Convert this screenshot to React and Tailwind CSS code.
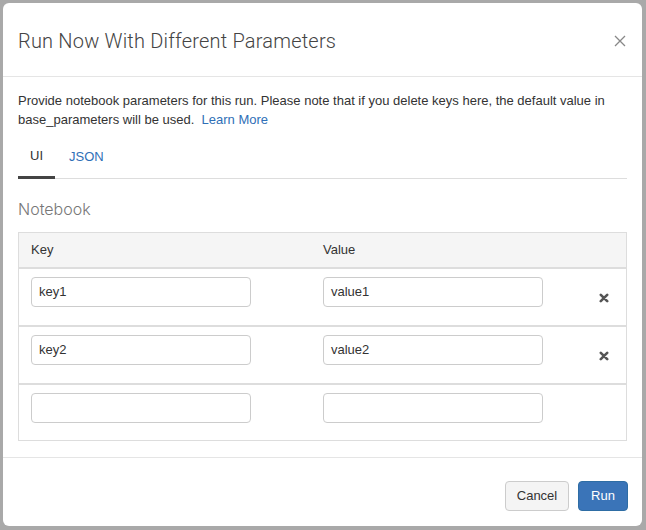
import React from "react";

function XBold() {
  return (
    <svg width="10" height="10" viewBox="0 0 10 10">
      <path d="M1.8 1.8 L8.2 8.2 M8.2 1.8 L1.8 8.2" stroke="#555" strokeWidth="2.6" strokeLinecap="round" />
    </svg>
  );
}

function Row({ k, v, del, last }) {
  return (
    <div className={`flex border-t-2 border-[#dddddd] pt-[8px] ${last ? "h-[57px]" : "h-[58px]"}`}>
      <div className="w-[292px] pl-[12px]">
        <div className="w-[220px] h-[30px] border border-[#cccccc] rounded-[4px] px-[7px] flex items-center text-[13px] text-[#333]">{k}</div>
      </div>
      <div className="w-[260px] pl-[12px]">
        <div className="w-[220px] h-[30px] border border-[#cccccc] rounded-[4px] px-[7px] flex items-center text-[13px] text-[#333]">{v}</div>
      </div>
      <div className="flex-1 pl-[28px] pt-[16px]">{del && <XBold />}</div>
    </div>
  );
}

export default function App() {
  return (
    <div className="w-[646px] h-[530px] bg-[#a9a9a9] p-[3px]" style={{ fontFamily: '"Liberation Sans", Arial, sans-serif' }}>
      <div className="w-[639px] h-[523px] bg-white rounded-[6px] flex flex-col overflow-hidden">
        <div className="h-[74px] border-b border-[#e5e5e5] flex items-center justify-between pl-[15px] pr-[16px] pt-[2px] shrink-0">
          <div className="text-[20px] text-[#444] tracking-[0.2px]" style={{ fontFamily: 'Roboto, "Liberation Sans", sans-serif', fontWeight: 300 }}>
            Run Now With Different Parameters
          </div>
          <svg width="12" height="12" viewBox="0 0 12 12">
            <path d="M1 1 L11 11 M11 1 L1 11" stroke="#888" strokeWidth="1.3" />
          </svg>
        </div>
        <div className="flex-1 px-[15px] pt-[14px] flex flex-col">
          <div className="text-[13px] leading-[19px] text-[#333]">
            Provide notebook parameters for this run. Please note that if you delete keys here, the default value in
            <br />
            base_parameters will be used.&nbsp; <span className="text-[#2f6fb7]">Learn More</span>
          </div>
          <div className="mt-[9px] flex border-b border-[#dddddd] h-[41px]">
            <div className="h-[41px] px-[12px] flex items-center text-[13px] text-[#333] border-b-[3px] border-[#444] mb-[-1px] pb-[3px]">UI</div>
            <div className="h-[40px] ml-[2px] px-[12px] flex items-center text-[13px] text-[#2f6fb7] pb-[3px]">JSON</div>
          </div>
          <div className="mt-[20px] h-[20px] leading-[20px] text-[16px] text-[#777]" style={{ fontFamily: 'Inter, "Liberation Sans", sans-serif', fontWeight: 300 }}>Notebook</div>
          <div className="mt-[13px] border border-[#dddddd]">
            <div className="h-[34px] bg-[#f5f5f5] flex items-center text-[13px] text-[#333]">
              <div className="w-[292px] pl-[12px]">Key</div>
              <div className="pl-[12px]">Value</div>
            </div>
            <Row k="key1" v="value1" del />
            <Row k="key2" v="value2" del />
            <Row k="" v="" last />
          </div>
        </div>
        <div className="h-[69px] border-t border-[#e5e5e5] flex justify-end items-start pt-[23px] pr-[14px] gap-[9px] shrink-0">
          <div className="w-[64px] h-[30px] rounded-[4px] border border-[#cccccc] bg-[#f4f4f4] flex items-center justify-center text-[13px] text-[#333]">Cancel</div>
          <div className="w-[50px] h-[30px] rounded-[4px] border border-[#2e6da4] bg-[#3a74b8] flex items-center justify-center text-[13px] text-white">Run</div>
        </div>
      </div>
    </div>
  );
}
